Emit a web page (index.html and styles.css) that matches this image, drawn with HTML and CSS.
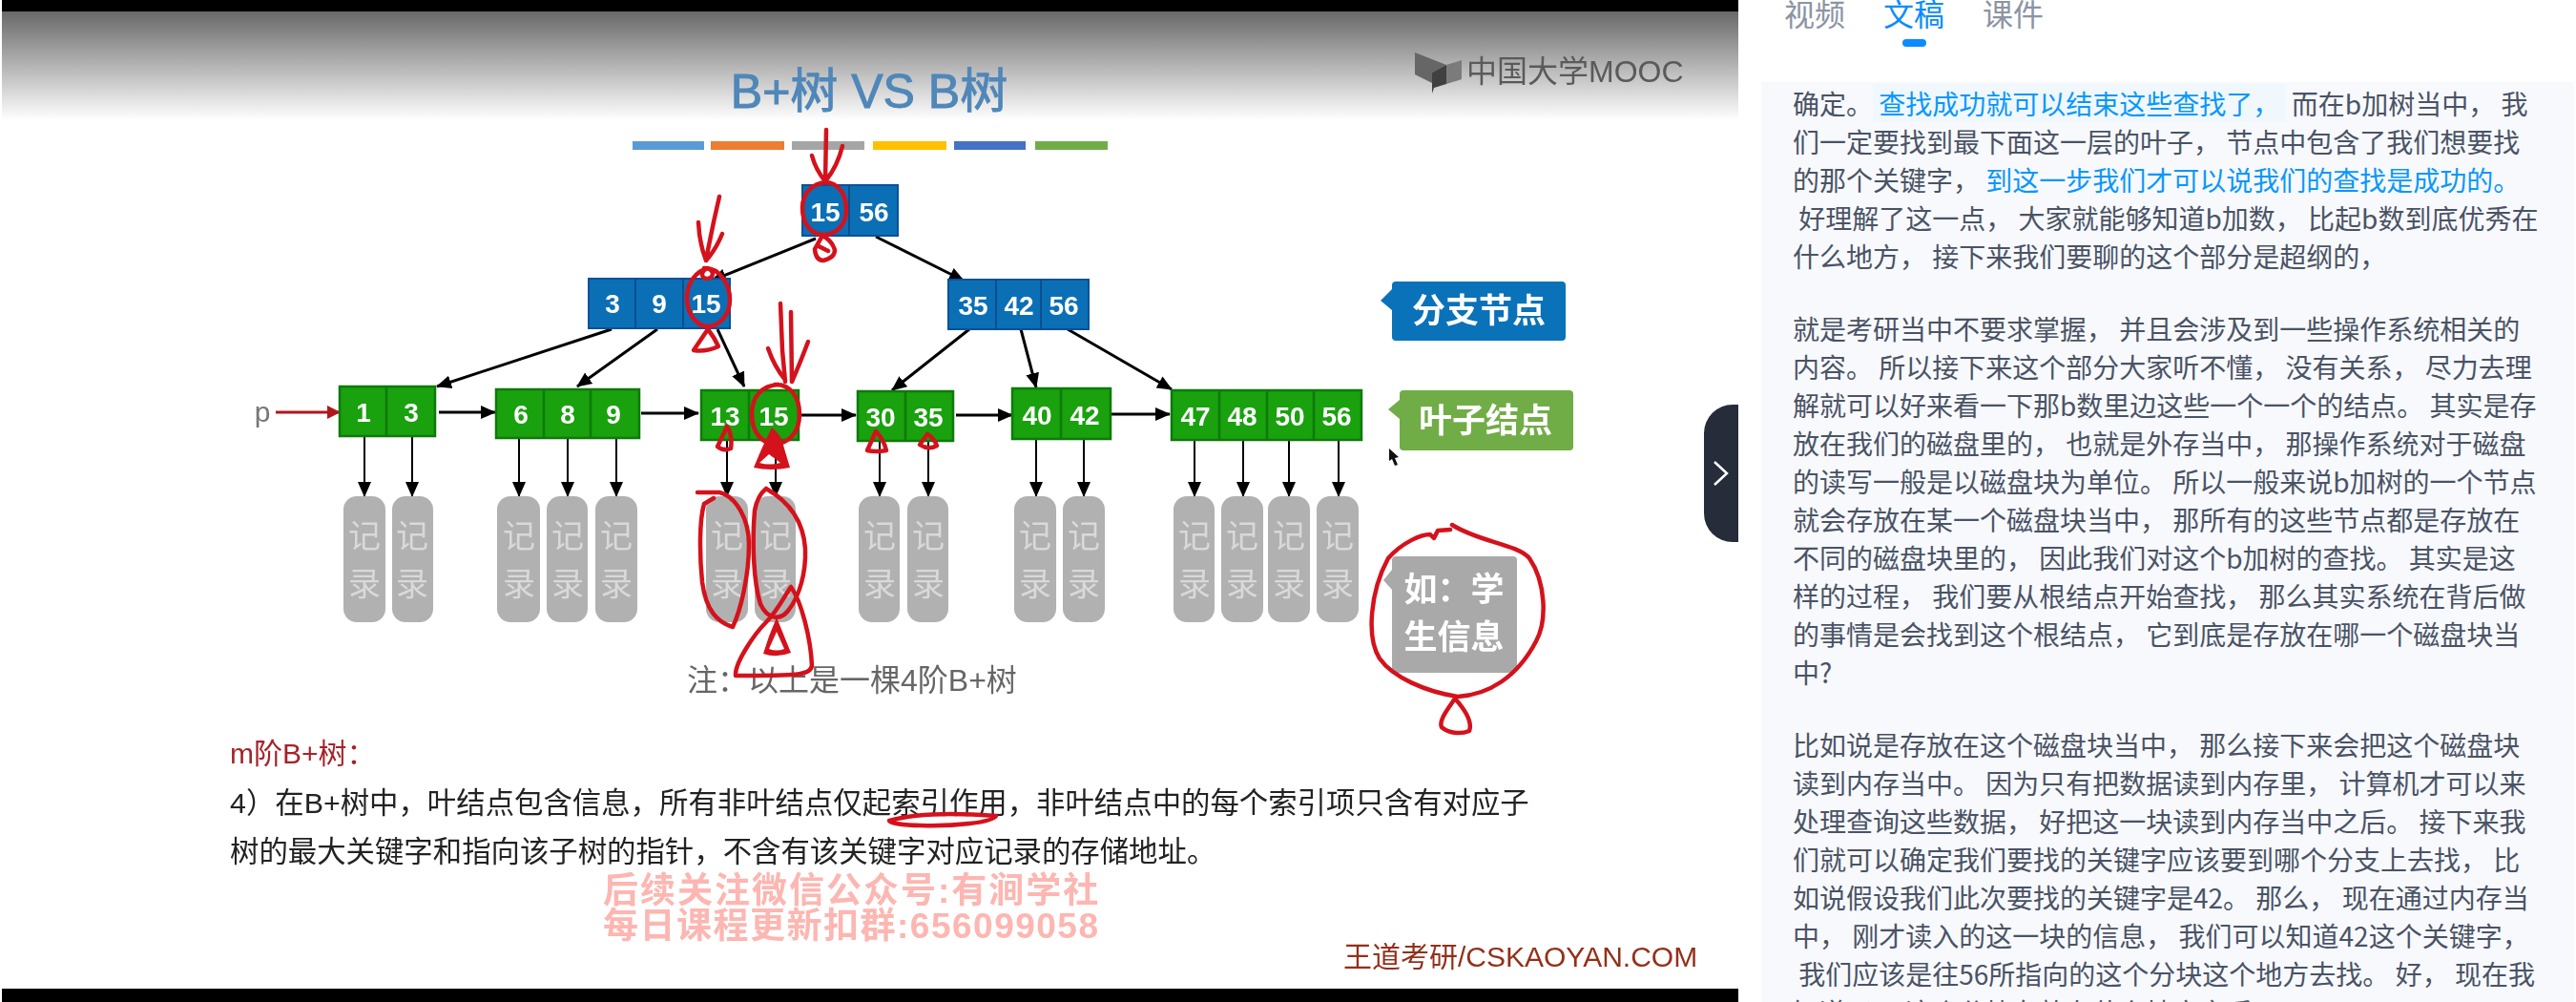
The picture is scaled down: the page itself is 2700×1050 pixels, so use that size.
FILE: index.html
```html
<!DOCTYPE html>
<html lang="zh-CN">
<head>
<meta charset="UTF-8" />
<title>B+树 VS B树</title>
<link rel="stylesheet" href="styles.css">
</head>
<body>

<section class="video">
  <div class="video-bar top"></div>
  <div class="slide">
    <svg class="slide-art" viewBox="2 12 1820 1024" width="1820" height="1024">
      <defs>
        <marker id="head" markerUnits="userSpaceOnUse" markerWidth="16" markerHeight="16" refX="15" refY="8" orient="auto">
          <path d="M0 1 L16 8 L0 15 Z" fill="#000" />
        </marker>
        <marker id="head-red" markerUnits="userSpaceOnUse" markerWidth="14" markerHeight="14" refX="13" refY="7" orient="auto">
          <path d="M0 0 L14 7 L0 14 Z" fill="#b3151c" />
        </marker>
      </defs>

      <!-- title and logo -->
      <text class="title" x="911" y="113">B+树 VS B树</text>
      <rect class="bar bar-1" x="663" y="148" width="75" height="9" />
      <rect class="bar bar-2" x="745" y="148" width="77" height="9" />
      <rect class="bar bar-3" x="830" y="148" width="76" height="9" />
      <rect class="bar bar-4" x="915" y="148" width="77" height="9" />
      <rect class="bar bar-5" x="1000" y="148" width="75" height="9" />
      <rect class="bar bar-6" x="1085" y="148" width="76" height="9" />

      <path class="logo-a" d="M1483 55 L1516 68 L1501 76 V87 L1483 78 Z" />
      <path class="logo-b" d="M1516 68 L1532 63 V83 L1516 88 Z" />
      <path class="logo-c" d="M1501 76 L1516 68 V88 L1503 92 L1501 98 Z" />
      <text class="logo-text" x="1537" y="86">中国大学MOOC</text>

      <!-- tree edges -->
      <line class="edge" x1="855" y1="250" x2="746" y2="294" marker-end="url(#head)" />
      <line class="edge" x1="918" y1="248" x2="1010" y2="294" marker-end="url(#head)" />
      <line class="edge" x1="641" y1="345" x2="458" y2="405" marker-end="url(#head)" />
      <line class="edge" x1="689" y1="345" x2="605" y2="405" marker-end="url(#head)" />
      <line class="edge" x1="752" y1="345" x2="780" y2="405" marker-end="url(#head)" />
      <line class="edge" x1="1016" y1="345" x2="935" y2="409" marker-end="url(#head)" />
      <line class="edge" x1="1070" y1="345" x2="1086" y2="406" marker-end="url(#head)" />
      <line class="edge" x1="1119" y1="345" x2="1228" y2="408" marker-end="url(#head)" />

      <!-- links between leaves -->
      <line class="edge" x1="460" y1="432" x2="519" y2="432" marker-end="url(#head)" />
      <line class="edge" x1="672" y1="433" x2="732" y2="433" marker-end="url(#head)" />
      <line class="edge" x1="840" y1="435" x2="897" y2="435" marker-end="url(#head)" />
      <line class="edge" x1="1002" y1="435" x2="1061" y2="435" marker-end="url(#head)" />
      <line class="edge" x1="1165" y1="434" x2="1226" y2="434" marker-end="url(#head)" />
      <line class="edge-red" x1="289" y1="432" x2="356" y2="432" marker-end="url(#head-red)" />
      <text class="pointer-label" x="275" y="442">p</text>

      <!-- leaves to records -->
      <line class="drop" x1="382" y1="457" x2="382" y2="520" marker-end="url(#head)" />
      <line class="drop" x1="432" y1="457" x2="432" y2="520" marker-end="url(#head)" />
      <line class="drop" x1="544" y1="459" x2="544" y2="520" marker-end="url(#head)" />
      <line class="drop" x1="595" y1="459" x2="595" y2="520" marker-end="url(#head)" />
      <line class="drop" x1="646" y1="459" x2="646" y2="520" marker-end="url(#head)" />
      <line class="drop" x1="762" y1="461" x2="762" y2="520" marker-end="url(#head)" />
      <line class="drop" x1="813" y1="461" x2="813" y2="520" marker-end="url(#head)" />
      <line class="drop" x1="922" y1="462" x2="922" y2="520" marker-end="url(#head)" />
      <line class="drop" x1="973" y1="462" x2="973" y2="520" marker-end="url(#head)" />
      <line class="drop" x1="1086" y1="460" x2="1086" y2="520" marker-end="url(#head)" />
      <line class="drop" x1="1136" y1="460" x2="1136" y2="520" marker-end="url(#head)" />
      <line class="drop" x1="1252" y1="461" x2="1252" y2="520" marker-end="url(#head)" />
      <line class="drop" x1="1303" y1="461" x2="1303" y2="520" marker-end="url(#head)" />
      <line class="drop" x1="1351" y1="461" x2="1351" y2="520" marker-end="url(#head)" />
      <line class="drop" x1="1403" y1="461" x2="1403" y2="520" marker-end="url(#head)" />

      <!-- branch nodes -->
      <g class="node-blue">
        <rect x="841" y="194" width="100" height="53" />
        <line x1="890" y1="194" x2="890" y2="247" />
        <rect x="617" y="292" width="148" height="52" />
        <line x1="666" y1="292" x2="666" y2="344" />
        <line x1="716" y1="292" x2="716" y2="344" />
        <rect x="994" y="293" width="147" height="52" />
        <line x1="1044" y1="293" x2="1044" y2="345" />
        <line x1="1091" y1="293" x2="1091" y2="345" />
      </g>
      <text class="key" x="865" y="232">15</text>
      <text class="key" x="916" y="232">56</text>
      <text class="key" x="642" y="328">3</text>
      <text class="key" x="691" y="328">9</text>
      <text class="key" x="740" y="328">15</text>
      <text class="key" x="1020" y="330">35</text>
      <text class="key" x="1068" y="330">42</text>
      <text class="key" x="1115" y="330">56</text>

      <!-- leaf nodes -->
      <g class="node-green">
        <rect x="356" y="405" width="100" height="52" />
        <line x1="405" y1="405" x2="405" y2="457" />
        <rect x="520" y="408" width="150" height="51" />
        <line x1="570" y1="408" x2="570" y2="459" />
        <line x1="619" y1="408" x2="619" y2="459" />
        <rect x="735" y="409" width="102" height="52" />
        <line x1="785" y1="409" x2="785" y2="461" />
        <rect x="899" y="410" width="100" height="52" />
        <line x1="949" y1="410" x2="949" y2="462" />
        <rect x="1061" y="407" width="103" height="53" />
        <line x1="1112" y1="407" x2="1112" y2="460" />
        <rect x="1228" y="409" width="199" height="52" />
        <line x1="1278" y1="409" x2="1278" y2="461" />
        <line x1="1328" y1="409" x2="1328" y2="461" />
        <line x1="1377" y1="409" x2="1377" y2="461" />
      </g>
      <text class="key" x="381" y="442">1</text>
      <text class="key" x="431" y="442">3</text>
      <text class="key" x="546" y="444">6</text>
      <text class="key" x="595" y="444">8</text>
      <text class="key" x="643" y="444">9</text>
      <text class="key" x="760" y="446">13</text>
      <text class="key" x="811" y="446">15</text>
      <text class="key" x="923" y="447">30</text>
      <text class="key" x="973" y="447">35</text>
      <text class="key" x="1087" y="445">40</text>
      <text class="key" x="1137" y="445">42</text>
      <text class="key" x="1253" y="446">47</text>
      <text class="key" x="1302" y="446">48</text>
      <text class="key" x="1352" y="446">50</text>
      <text class="key" x="1401" y="446">56</text>

      <!-- records -->
      <g class="pill">
        <rect x="360" y="520" width="44" height="132" rx="14" />
        <rect x="411" y="520" width="43" height="132" rx="14" />
        <rect x="521" y="520" width="45" height="132" rx="14" />
        <rect x="573" y="520" width="43" height="132" rx="14" />
        <rect x="624" y="520" width="44" height="132" rx="14" />
        <rect x="740" y="520" width="44" height="132" rx="14" />
        <rect x="791" y="520" width="43" height="132" rx="14" />
        <rect x="900" y="520" width="43" height="132" rx="14" />
        <rect x="951" y="520" width="43" height="132" rx="14" />
        <rect x="1063" y="520" width="44" height="132" rx="14" />
        <rect x="1114" y="520" width="44" height="132" rx="14" />
        <rect x="1230" y="520" width="43" height="132" rx="14" />
        <rect x="1280" y="520" width="44" height="132" rx="14" />
        <rect x="1329" y="520" width="44" height="132" rx="14" />
        <rect x="1380" y="520" width="44" height="132" rx="14" />
      </g>
      <g class="pill-text">
        <text x="382" y="574">记</text><text x="382" y="624">录</text>
        <text x="432" y="574">记</text><text x="432" y="624">录</text>
        <text x="544" y="574">记</text><text x="544" y="624">录</text>
        <text x="595" y="574">记</text><text x="595" y="624">录</text>
        <text x="646" y="574">记</text><text x="646" y="624">录</text>
        <text x="762" y="574">记</text><text x="762" y="624">录</text>
        <text x="813" y="574">记</text><text x="813" y="624">录</text>
        <text x="922" y="574">记</text><text x="922" y="624">录</text>
        <text x="973" y="574">记</text><text x="973" y="624">录</text>
        <text x="1085" y="574">记</text><text x="1085" y="624">录</text>
        <text x="1136" y="574">记</text><text x="1136" y="624">录</text>
        <text x="1252" y="574">记</text><text x="1252" y="624">录</text>
        <text x="1302" y="574">记</text><text x="1302" y="624">录</text>
        <text x="1351" y="574">记</text><text x="1351" y="624">录</text>
        <text x="1402" y="574">记</text><text x="1402" y="624">录</text>
      </g>

      <!-- callouts -->
      <path class="callout-blue" d="M1463 295 H1637 Q1641 295 1641 299 V353 Q1641 357 1637 357 H1463 Q1459 357 1459 353 V325 L1447 315 L1459 303 V299 Q1459 295 1463 295 Z" />
      <text class="callout-text" x="1550" y="338">分支节点</text>
      <path class="callout-green" d="M1471 409 H1645 Q1649 409 1649 413 V468 Q1649 472 1645 472 H1471 Q1467 472 1467 468 V439 L1455 429 L1467 419 V413 Q1467 409 1471 409 Z" />
      <text class="callout-text" x="1557" y="453">叶子结点</text>
      <path class="callout-gray" d="M1463 583 H1586 Q1590 583 1590 587 V701 Q1590 705 1586 705 H1463 Q1459 705 1459 701 V618 L1450 608 L1459 597 V587 Q1459 583 1463 583 Z" />
      <text class="callout-text" x="1524" y="630">如：学</text>
      <text class="callout-text" x="1524" y="680">生信息</text>

      <path class="cursor" d="M1456 470 L1456 483 L1459 481 L1462 488 L1465 487 L1462 480 L1466 479 Z" />

      <!-- slide text -->
      <text class="note" x="720" y="724">注：以上是一棵4阶B+树</text>
      <text class="rule-head" x="241" y="800">m阶B+树：</text>
      <text class="rule-body" x="241" y="852">4）在B+树中，叶结点包含信息，所有非叶结点仅起索引作用，非叶结点中的每个索引项只含有对应子</text>
      <text class="rule-body" x="241" y="903">树的最大关键字和指向该子树的指针，不含有该关键字对应记录的存储地址。</text>
      <text class="watermark line-one" x="632" y="946">后续关注微信公众号:有涧学社</text>
      <text class="watermark line-two" x="632" y="983">每日课程更新扣群:656099058</text>
      <text class="credit" x="1408" y="1013">王道考研/CSKAOYAN.COM</text>

      <!-- pen marks -->
      <g class="pen">
        <path d="M866 136 L865 190 M851 163 Q855 178 865 190 Q878 174 883 153" />
        <path d="M864 191 C880 191 887 205 887 220 C887 236 876 246 863 246 C850 246 841 234 841 218 C841 202 852 192 866 191" />
        <path d="M862 247 L854 261 Q855 273 863 273 Q875 270 875 262 Q872 252 862 247 M858 258 L868 263" />
        <path d="M754 206 Q746 240 740 273 M732 233 Q733 255 740 273 Q750 262 757 245" />
        <path d="M738 281 C754 280 765 298 765 314 C765 332 752 342 742 342 C731 342 720 330 720 312 C720 296 730 284 742 281 C734 284 734 292 742 292 C750 290 748 281 738 281" />
        <path d="M742 345 L727 367 Q740 369 753 363 Q749 354 742 345" />
        <path d="M818 318 L820 367 L823 400 M829 327 L830 400 M805 365 Q812 385 823 398 M847 358 Q838 382 830 400" />
        <path d="M812 403 C828 402 838 416 838 434 C838 454 826 465 812 465 C798 465 788 452 788 434 C788 416 798 404 816 403" />
        <path d="M762 447 L752 468 Q758 473 766 470 Q768 456 762 447" />
        <path d="M918 452 L909 472 Q918 474 929 472 Q926 460 918 452" />
        <path d="M972 455 L964 466 Q973 472 982 467 Q979 459 972 455" />
        <path d="M731 516 H754 C772 520 785 545 785 570 C785 605 776 640 768 657 C752 652 740 640 736 610 C733 580 733 545 738 528 L748 522" />
        <path d="M803 512 C826 525 842 545 844 575 C845 600 838 625 826 640 C818 650 805 650 797 633 C790 610 788 570 791 535 C793 524 798 516 803 512" />
        <path d="M829 615 C840 630 850 670 851 698 C848 708 835 708 771 708 C770 695 790 665 803 652 C815 640 822 625 829 615" />
        <path d="M932 860 C960 852 1005 852 1044 855 C1040 862 1000 866 965 865 C945 865 932 862 932 860 Z" />
        <path d="M1522 550 C1550 568 1590 570 1603 585 C1620 610 1622 650 1610 672 C1590 710 1560 728 1528 730 C1495 725 1460 710 1446 690 C1432 668 1436 620 1455 585 C1470 568 1490 560 1499 560 L1503 564 L1507 556 L1520 555" />
        <path d="M1525 732 C1516 745 1508 755 1511 762 C1518 768 1530 770 1540 766 C1544 755 1534 742 1525 732 Z" />
      </g>
      <path class="pen-fill" fill-rule="evenodd" d="M809 448 Q820 456 822 470 L828 490 Q808 494 790 490 Q798 470 809 448 Z M796 485 Q806 488 818 485 L806 476 Z" />
      <path class="pen-fill" fill-rule="evenodd" d="M814 647 L829 684 Q814 690 800 685 Q806 665 814 647 Z M806 680 Q814 683 822 680 L814 662 Z" />
    </svg>
    <button class="panel-toggle" aria-label="收起">
      <svg width="16" height="26" viewBox="0 0 16 26"><polyline points="1,1 14,13 1,25" /></svg>
    </button>
  </div>
  <div class="video-bar bottom"></div>
</section>

<aside class="side">
  <nav class="tabs">
    <a class="tab">视频</a>
    <a class="tab active">文稿</a>
    <a class="tab">课件</a>
  </nav>
  <div class="transcript">
<p>确定。<span class="hit"> 查找成功就可以结束这些查找了， </span> 而在b加树当中， 我
们一定要找到最下面这一层的叶子， 节点中包含了我们想要找
的那个关键字， <span class="link">到这一步我们才可以说我们的查找是成功的。</span>
 好理解了这一点， 大家就能够知道b加数， 比起b数到底优秀在
什么地方， 接下来我们要聊的这个部分是超纲的，</p>
<p>就是考研当中不要求掌握， 并且会涉及到一些操作系统相关的
内容。 所以接下来这个部分大家听不懂， 没有关系， 尽力去理
解就可以好来看一下那b数里边这些一个一个的结点。 其实是存
放在我们的磁盘里的， 也就是外存当中， 那操作系统对于磁盘
的读写一般是以磁盘块为单位。 所以一般来说b加树的一个节点
就会存放在某一个磁盘块当中， 那所有的这些节点都是存放在
不同的磁盘块里的， 因此我们对这个b加树的查找。 其实是这
样的过程， 我们要从根结点开始查找， 那么其实系统在背后做
的事情是会找到这个根结点， 它到底是存放在哪一个磁盘块当
中?</p>
<p>比如说是存放在这个磁盘块当中， 那么接下来会把这个磁盘块
读到内存当中。 因为只有把数据读到内存里， 计算机才可以来
处理查询这些数据， 好把这一块读到内存当中之后。 接下来我
们就可以确定我们要找的关键字应该要到哪个分支上去找， 比
如说假设我们此次要找的关键字是42。 那么， 现在通过内存当
中， 刚才读入的这一块的信息， 我们可以知道42这个关键字，
 我们应该是往56所指向的这个分块这个地方去找。 好， 现在我
知道了， 这个分块存放在什么地方之后</p>
  </div>
</aside>

</body>
</html>
```

FILE: styles.css
```css
html, body {
  margin: 0;
  padding: 0;
  height: 1050px;
  overflow: hidden;
  background: #fff;
}
body {
  display: flex;
  font-family: "Liberation Sans", "Noto Sans CJK SC", sans-serif;
}

/* video column */
.video {
  width: 1820px;
  margin-left: 2px;
  flex: none;
  display: flex;
  flex-direction: column;
}
.video-bar {
  background: #000;
}
.video-bar.top {
  height: 12px;
}
.video-bar.bottom {
  height: 14px;
}
.slide {
  position: relative;
  height: 1024px;
  background: linear-gradient(#696969, #fff 114px);
}
.slide-art {
  display: block;
  filter: blur(0.6px);
}
.panel-toggle {
  position: absolute;
  right: 0;
  top: 412px;
  width: 36px;
  height: 144px;
  padding: 0;
  border: none;
  border-radius: 30px 0 0 30px;
  background: #262c3a;
  display: flex;
  align-items: center;
  justify-content: center;
}
.panel-toggle polyline {
  fill: none;
  stroke: #fff;
  stroke-width: 2.5;
}

/* slide artwork */
.slide-art text {
  font-family: "Liberation Sans", "Noto Sans CJK SC", sans-serif;
}
.title {
  font-size: 50px;
  fill: #4f87b9;
  stroke: #4f87b9;
  stroke-width: 1px;
  text-anchor: middle;
}
.bar-1 { fill: #5b9bd5; }
.bar-2 { fill: #ed7d31; }
.bar-3 { fill: #a5a5a5; }
.bar-4 { fill: #ffc000; }
.bar-5 { fill: #4472c4; }
.bar-6 { fill: #70ad47; }
.logo-a { fill: #666; }
.logo-b { fill: #7b7b7b; }
.logo-c { fill: #404040; }
.logo-text {
  font-size: 32px;
  fill: #5a5a5a;
}
.edge {
  stroke: #000;
  stroke-width: 3;
}
.edge-red {
  stroke: #b3151c;
  stroke-width: 3;
}
.drop {
  stroke: #000;
  stroke-width: 2;
}
.pointer-label {
  font-size: 30px;
  fill: #777;
  text-anchor: middle;
}
.node-blue rect {
  fill: #0b6fb6;
  stroke: #0a5199;
  stroke-width: 2;
}
.node-blue line {
  stroke: #0a4f8e;
  stroke-width: 2;
}
.node-green rect {
  fill: #19a10e;
  stroke: #0e7a0b;
  stroke-width: 2.5;
}
.node-green line {
  stroke: #0e7a0b;
  stroke-width: 2.5;
}
.key {
  font-size: 28px;
  font-weight: bold;
  fill: #fff;
  text-anchor: middle;
}
.pill rect {
  fill: #b1b1b1;
}
.pill-text text {
  font-size: 34px;
  fill: #d9d9d9;
  text-anchor: middle;
}
.callout-blue { fill: #0a72b9; }
.callout-green { fill: #71ad47; }
.callout-gray { fill: #a9a9a9; }
.callout-text {
  font-size: 35px;
  font-weight: bold;
  fill: #fff;
  text-anchor: middle;
}
.cursor { fill: #111; }
.note {
  font-size: 32px;
  fill: #666;
}
.rule-head {
  font-size: 30px;
  fill: #a5232a;
}
.rule-body {
  font-size: 30.4px;
  fill: #222;
}
.watermark {
  font-size: 37px;
  font-weight: bold;
  fill: #fdb6b1;
}
.watermark.line-one {
  letter-spacing: 2px;
}
.watermark.line-two {
  letter-spacing: 1.5px;
}
.credit {
  font-size: 30px;
  fill: #93301a;
}
.pen {
  fill: none;
  stroke: #d4121c;
  stroke-width: 4.5;
  stroke-linecap: round;
  stroke-linejoin: round;
}
.pen-fill {
  fill: #d4121c;
}

/* side column */
.side {
  flex: 1;
  min-width: 0;
  padding: 0 2px 0 24px;
  display: flex;
  flex-direction: column;
  overflow: hidden;
}
.tabs {
  height: 89px;
  margin-top: -3px;
  padding-left: 24px;
  display: flex;
  gap: 40px;
  flex: none;
}
.tab {
  width: 64px;
  font-family: "Noto Sans CJK SC", sans-serif;
  font-size: 32px;
  line-height: 32px;
  color: #8b94a3;
  text-align: center;
}
.tab.active {
  color: #0a8cff;
}
.tab.active::after {
  content: "";
  display: block;
  width: 25px;
  height: 8px;
  margin: 12px auto 0;
  border-radius: 4px;
  background: #0a8cff;
}
.transcript {
  flex: 1;
  padding: 2px 0 0 33px;
  background: #f7f9fd;
  overflow: hidden;
  font-family: "Noto Sans CJK SC", sans-serif;
  font-size: 28px;
  line-height: 40px;
  color: #4a5365;
}
.transcript p {
  margin: 0 0 36px;
  white-space: pre;
}
.hit {
  color: #0a97fa;
  background: #f0f8fe;
}
.link {
  color: #0a97fa;
}
```
